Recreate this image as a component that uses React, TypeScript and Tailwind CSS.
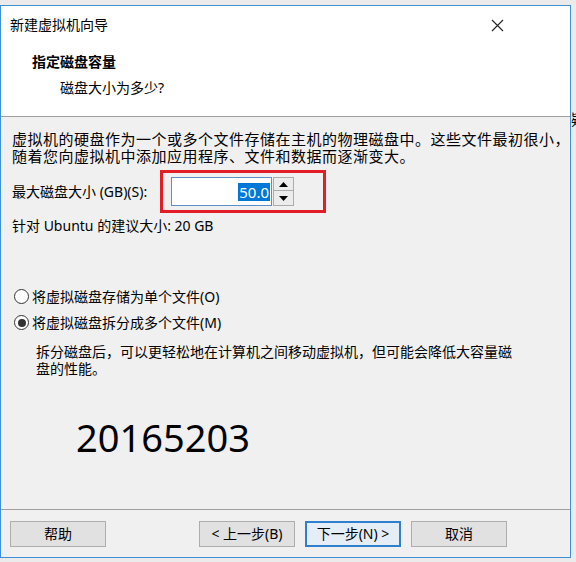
import React from "react";

const FONT = "font-['Noto_Sans','Noto_Sans_CJK_SC',sans-serif]";

function Radio({checked, label}: { checked?: boolean; label: string }) {
    return (
        <div className="flex items-center h-[17px] ml-[2px]">
            <span className="w-[15px] h-[15px] rounded-full border border-[#333333] bg-white flex items-center justify-center">
                {checked && <span className="w-[8px] h-[8px] rounded-full bg-[#333333]"/>}
            </span>
            <span className="ml-[3px] text-[14px] leading-[17px]">{label}</span>
        </div>
    );
}

function Button({label, primary}: { label: string; primary?: boolean }) {
    return (
        <button
            className={primary
                ? "w-[96px] h-[26px] border-2 border-[#2f7fcf] bg-[#e5eef7] text-[14px] leading-[20px] text-black"
                : "w-[96px] h-[26px] border border-[#adadad] bg-[#e1e1e1] text-[14px] leading-[24px] text-black"}>
            {label}
        </button>
    );
}

function Arrow({up}: { up?: boolean }) {
    return (
        <svg width="9" height="5" viewBox="0 0 9 5">
            {up ? <polygon points="0,5 9,5 4.5,0" fill="#000"/> : <polygon points="0,0 9,0 4.5,5" fill="#000"/>}
        </svg>
    );
}

export default function App() {
    return (
        <main className={`w-[576px] h-[562px] bg-[#ebebeb] pt-[5px] flex overflow-hidden text-black ${FONT}`}>
            <div className="w-[571px] h-[553px] shrink-0 border border-[#3d8fd6] flex flex-col bg-[#f0f0f0]">
                <header className="h-[111px] shrink-0 bg-white border-b border-[#a0a0a0]">
                    <div className="h-[38px] flex items-center justify-between pl-[9px] pr-[66px]">
                        <span className="text-[14px] leading-[18px]">新建虚拟机向导</span>
                        <svg width="13" height="13" viewBox="0 0 13 13">
                            <path d="M1 1 L12 12 M12 1 L1 12" stroke="#222" strokeWidth="1.1"/>
                        </svg>
                    </div>
                    <div className="mt-[9px] pl-[31px] font-bold text-[14px] leading-[18px]">指定磁盘容量</div>
                    <div className="mt-[8px] pl-[59px] text-[14px] leading-[18px]">磁盘大小为多少?</div>
                </header>

                <section className="flex-1 pl-[11px] pt-[14px] overflow-hidden">
                    <p className="text-[15px] tracking-[0.5px] leading-[17px] whitespace-nowrap">
                        虚拟机的硬盘作为一个或多个文件存储在主机的物理磁盘中。这些文件最初很小，<br/>
                        随着您向虚拟机中添加应用程序、文件和数据而逐渐变大。
                    </p>

                    <div className="relative mt-[12px] h-[29px] flex items-center">
                        <span className="w-[159px] text-[14px] leading-[17px] whitespace-nowrap">最大磁盘大小 (GB)(S):</span>
                        <div className="w-[101px] h-[29px] border border-[#5a8fc8] bg-white flex items-center justify-end pr-[1px]">
                            <span className="bg-[#0078d7] text-white text-[15px] leading-[18px] px-[1px]">50.0</span>
                        </div>
                        <div className="ml-[1px] w-[21px] h-[29px] flex flex-col">
                            <div className="h-[14px] border border-[#acacac] bg-[#ececec] flex items-center justify-center">
                                <Arrow up/>
                            </div>
                            <div className="h-[15px] border border-t-0 border-[#acacac] bg-[#ececec] flex items-center justify-center">
                                <Arrow/>
                            </div>
                        </div>
                        <div className="absolute left-[148px] top-[-7px] w-[166px] h-[43px] border-[3px] border-[#e21d25]"/>
                    </div>

                    <p className="mt-[11px] text-[14px] leading-[17px]">针对 Ubuntu 的建议大小: 20 GB</p>

                    <div className="mt-[54px]">
                        <Radio label="将虚拟磁盘存储为单个文件(O)"/>
                    </div>
                    <div className="mt-[9px]">
                        <Radio checked label="将虚拟磁盘拆分成多个文件(M)"/>
                    </div>
                    <p className="mt-[12px] pl-[24px] text-[14px] leading-[17px] whitespace-nowrap">
                        拆分磁盘后，可以更轻松地在计算机之间移动虚拟机，但可能会降低大容量磁<br/>
                        盘的性能。
                    </p>

                    <div className="mt-[41px] ml-[64px] text-[38px] leading-[38px] font-['Noto_Sans',sans-serif]">
                        20165203
                    </div>
                </section>

                <footer className="h-[48px] shrink-0 border-t border-[#a0a0a0] flex items-start justify-between pt-[11px] pl-[9px] pr-[63px]">
                    <Button label="帮助"/>
                    <div className="flex gap-[10px]">
                        <Button label="< 上一步(B)"/>
                        <Button primary label="下一步(N) >"/>
                        <Button label="取消"/>
                    </div>
                </footer>
            </div>
            <div className="w-[5px] shrink-0 overflow-hidden">
                <div className="mt-[105px] text-[15px] leading-[18px] w-[20px]">疑</div>
            </div>
        </main>
    );
}
